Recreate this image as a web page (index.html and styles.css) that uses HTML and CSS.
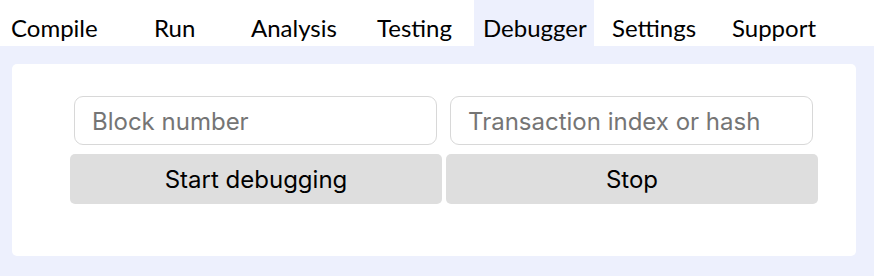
FILE: index.html
```html
<!DOCTYPE html>
<html>
<head>
<meta charset="utf-8">
<link rel="stylesheet" href="styles.css">
</head>
<body>
<nav class="tabs">
  <div class="tab tab-compile">Compile</div>
  <div class="tab tab-run">Run</div>
  <div class="tab tab-analysis">Analysis</div>
  <div class="tab tab-testing">Testing</div>
  <div class="tab tab-debugger active">Debugger</div>
  <div class="tab tab-settings">Settings</div>
  <div class="tab tab-support">Support</div>
</nav>
<main class="panel">
  <div class="card">
    <div class="inputs">
      <input class="field" type="text" placeholder="Block number">
      <input class="field" type="text" placeholder="Transaction index or hash">
    </div>
    <div class="buttons">
      <button class="btn">Start debugging</button>
      <button class="btn">Stop</button>
    </div>
  </div>
</main>
</body>
</html>
```

FILE: styles.css
```css
html, body {
  margin: 0;
  padding: 0;
}
body {
  background: #edf0fd;
  width: 874px;
  height: 276px;
  overflow: hidden;
}
.tabs {
  display: flex;
  height: 46px;
  background: #ffffff;
  padding-left: 2px;
  font-family: Lato, "Open Sans", sans-serif;
  font-size: 24px;
  color: #000;
}
.tab {
  box-sizing: border-box;
  padding: 0 9px;
  line-height: 55px;
  height: 46px;
  white-space: nowrap;
  flex: none;
}
.tab.active {
  background: #edf0fd;
}
.tab-compile { width: 143px; }
.tab-run { width: 97px; }
.tab-analysis { width: 126px; }
.tab-testing { width: 106px; }
.tab-debugger { width: 120px; margin-right: 9px; }
.tab-settings { width: 120px; }
.panel {
  padding: 18px 18px 0 12px;
}
.card {
  width: 844px;
  height: 192px;
  box-sizing: border-box;
  background: #ffffff;
  border-radius: 5px;
  padding: 32px 0 0 58px;
}
.inputs {
  display: flex;
  gap: 13px;
  padding-left: 4px;
  height: 49px;
}
.field {
  width: 363px;
  height: 49px;
  box-sizing: border-box;
  margin: 0;
  border: 1.5px solid #d8d8d8;
  border-radius: 9px;
  padding: 2px 0 0 17px;
  font-family: Inter, "Liberation Sans", sans-serif;
  font-size: 24px;
  color: #000;
  background: #fff;
  outline: none;
}
.field::placeholder {
  color: #757575;
}
.buttons {
  display: flex;
  gap: 4px;
  margin-top: 9px;
  width: 748px;
}
.btn {
  flex: 1;
  height: 50px;
  border: none;
  border-radius: 5px;
  background: #dedede;
  font-family: Inter, "Liberation Sans", sans-serif;
  font-size: 24px;
  color: #000;
  padding: 0;
}
```
